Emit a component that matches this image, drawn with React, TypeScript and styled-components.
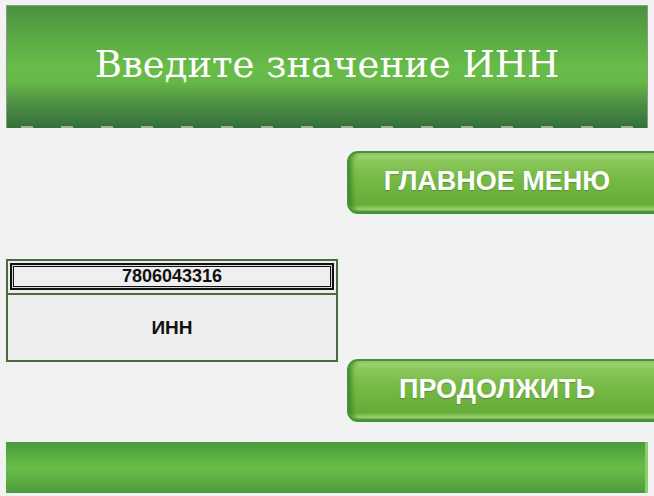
import * as React from "react";
import styled, { createGlobalStyle } from "styled-components";

const GlobalStyle = createGlobalStyle`
  html, body {
    margin: 0;
    padding: 0;
    background: #f2f2f2;
    overflow: hidden;
  }
`;

const Page = styled.div`
  width: 654px;
  height: 496px;
  padding: 5px 6px 0 6px;
  box-sizing: border-box;
  display: flex;
  flex-direction: column;
  font-family: "Liberation Sans", Arial, sans-serif;
`;

const Header = styled.div`
  height: 123px;
  box-sizing: border-box;
  border: 1px solid #8c9a88;
  border-bottom: none;
  background:
    repeating-linear-gradient(
        to right,
        transparent 0px,
        transparent 14px,
        #a3ad9f 14px,
        #a3ad9f 26px,
        transparent 26px,
        transparent 40px
      )
      bottom / 100% 2px no-repeat,
    linear-gradient(
      to bottom,
      #4b9140 0%,
      #5aa845 25%,
      #68bc48 50%,
      #66b947 62%,
      #4e8f43 80%,
      #33703a 100%
    );
  display: flex;
  align-items: center;
  justify-content: center;
`;

const Title = styled.h1`
  margin: 0;
  padding-bottom: 6px;
  font-family: "DejaVu Serif", "Liberation Serif", serif;
  font-weight: normal;
  font-size: 37px;
  color: #ffffff;
`;

const Middle = styled.div`
  height: 314px;
  display: grid;
  grid-template-columns: 332px 1fr;
  column-gap: 9px;
`;

const LeftCol = styled.div`
  padding-top: 131px;
`;

const RightCol = styled.div`
  padding-top: 23px;
  display: flex;
  flex-direction: column;
  gap: 145px;
`;

const Panel = styled.div`
  height: 103px;
  box-sizing: border-box;
  border: 2px solid #4d6b3e;
  background: #eeeeee;
  display: flex;
  flex-direction: column;
`;

const ValueBox = styled.div`
  margin: 2px 2px 0 2px;
  height: 27px;
  box-sizing: border-box;
  border: 2px solid #111111;
  box-shadow: inset 0 0 0 1px #d8d8d8, inset 0 0 0 2px #111111;
  background: #efefef;
  display: flex;
  align-items: center;
  justify-content: center;
  font-size: 18px;
  font-weight: bold;
  color: #111111;
`;

const Divider = styled.div`
  margin-top: 3px;
  height: 2px;
  background: #4d6b3e;
`;

const Caption = styled.div`
  flex: 1;
  display: flex;
  align-items: center;
  justify-content: center;
  font-size: 19px;
  font-weight: bold;
  color: #111111;
`;

const GreenButton = styled.button`
  width: 320px;
  height: 63px;
  padding: 0 20px 3px 0;
  box-sizing: border-box;
  border: 2px solid #3f9433;
  border-radius: 11px;
  background: linear-gradient(
    to bottom,
    #b4dc86 0%,
    #8cc85c 12%,
    #78bb48 40%,
    #6cb23d 70%,
    #64ad38 88%,
    #a8d57a 96%,
    #4f9b33 100%
  );
  box-shadow: inset 3px 0 4px rgba(40, 110, 30, 0.6);
  color: #ffffff;
  font-family: "Liberation Sans", Arial, sans-serif;
  font-weight: bold;
  font-size: 27px;
  text-shadow: 0 1px 1px rgba(40, 90, 20, 0.4);
  display: flex;
  align-items: center;
  justify-content: center;
  cursor: pointer;
`;

const Footer = styled.div`
  height: 51px;
  box-sizing: border-box;
  border-right: 3px solid #8ccf6a;
  background: linear-gradient(
    to bottom,
    #4a9a3c 0%,
    #58ac42 25%,
    #68bd48 50%,
    #5cae43 75%,
    #4a9b3d 100%
  );
`;

export default function App() {
  return (
    <>
      <GlobalStyle />
      <Page>
        <Header>
          <Title>Введите значение ИНН</Title>
        </Header>
        <Middle>
          <LeftCol>
            <Panel>
              <ValueBox>7806043316</ValueBox>
              <Divider />
              <Caption>ИНН</Caption>
            </Panel>
          </LeftCol>
          <RightCol>
            <GreenButton>ГЛАВНОЕ МЕНЮ</GreenButton>
            <GreenButton>ПРОДОЛЖИТЬ</GreenButton>
          </RightCol>
        </Middle>
        <Footer />
      </Page>
    </>
  );
}
